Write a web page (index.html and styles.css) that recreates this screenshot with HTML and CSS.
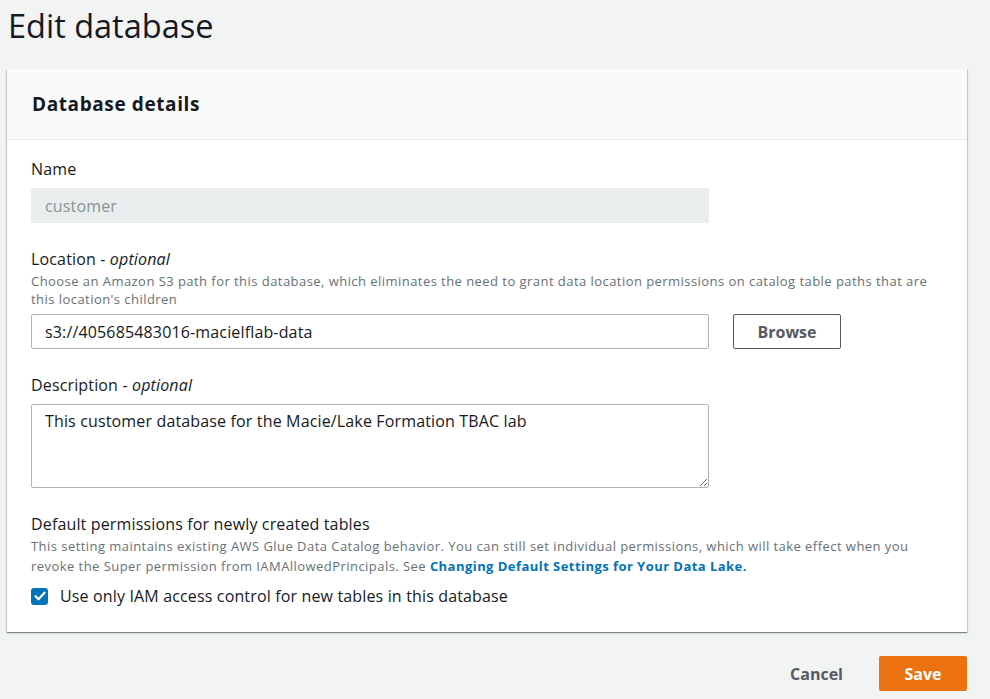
FILE: index.html
```html
<!DOCTYPE html>
<html lang="en">
<head>
<meta charset="utf-8">
<title>Edit database</title>
<link rel="stylesheet" href="styles.css">
</head>
<body>
<main class="page">
  <h1 class="title">Edit database</h1>
  <section class="card">
    <header class="card-header"><h2>Database details</h2></header>
    <div class="card-body">
      <div class="field">
        <label class="label">Name</label>
        <div class="input-row"><input class="input" type="text" value="customer" disabled></div>
      </div>
      <div class="field">
        <label class="label">Location - <i>optional</i></label>
        <p class="desc desc-a">Choose an Amazon S3 path for this database, which eliminates the need to grant data location permissions on catalog table paths that are this location's children</p>
        <div class="input-row after-desc">
          <input class="input" type="text" value="s3://405685483016-macielflab-data">
          <button class="btn-normal" type="button">Browse</button>
        </div>
      </div>
      <div class="field">
        <label class="label">Description - <i>optional</i></label>
        <div class="input-row"><textarea class="textarea">This customer database for the Macie/Lake Formation TBAC lab</textarea></div>
      </div>
      <div class="field">
        <label class="label">Default permissions for newly created tables</label>
        <p class="desc desc-b">This setting maintains existing AWS Glue Data Catalog behavior. You can still set individual permissions, which will take effect when you revoke the Super permission from IAMAllowedPrincipals. See <a class="link" href="#">Changing Default Settings for Your Data Lake.</a></p>
        <label class="check">
          <span class="box"><svg viewBox="0 0 16 16" width="16" height="16"><path d="M3.5 8.2l3 3 6-6.5" fill="none" stroke="#fff" stroke-width="2.2" stroke-linecap="round" stroke-linejoin="round"/></svg></span>
          <span class="check-text">Use only IAM access control for new tables in this database</span>
        </label>
      </div>
    </div>
  </section>
  <div class="actions">
    <button class="btn-link" type="button">Cancel</button>
    <button class="btn-primary" type="button">Save</button>
  </div>
</main>
</body>
</html>
```

FILE: styles.css
```css
* { box-sizing: border-box; }
html, body { margin: 0; padding: 0; }
body {
  background: #f2f3f3;
  font-family: "Open Sans", "Noto Sans", Arial, sans-serif;
  color: #16191f;
  width: 990px;
  height: 699px;
  overflow: hidden;
}
.page {
  width: 960px;
  margin-left: 7px;
}
.title {
  margin: 0;
  padding: 6px 0 0 1px;
  font-size: 32.5px;
  line-height: 40px;
  font-weight: 400;
  color: #16191f;
}
.card {
  margin-top: 23px;
  background: #fff;
  box-shadow: 0 1px 1px 0 rgba(0,28,36,.3), 1px 1px 1px 0 rgba(0,28,36,.15), -1px 1px 1px 0 rgba(0,28,36,.15);
}
.card-header {
  height: 71px;
  background: #fafafa;
  border-bottom: 1px solid #eaeded;
  display: flex;
  align-items: center;
  padding: 0 25px;
}
.card-header h2 {
  margin: 0;
  font-size: 19px;
  letter-spacing: 0.6px;
  font-weight: 700;
  line-height: 22px;
}
.card-body {
  padding: 18px 24px 25px;
  display: flex;
  flex-direction: column;
  gap: 25px;
}
.field { display: flex; flex-direction: column; }
.label {
  font-size: 16px;
  line-height: 22px;
  letter-spacing: 0.15px;
}
.label i { font-style: italic; }
.desc {
  margin: 0;
  font-size: 13px;
  letter-spacing: 0.45px;
  color: #687078;
}
.desc-a { line-height: 18px; margin-top: 2px; }
.desc-b { line-height: 20px; margin-top: 1px; }
.input-row {
  display: flex;
  gap: 24px;
  margin-top: 8px;
}
.input-row.after-desc { margin-top: 6px; }
.input {
  width: 678px;
  height: 35px;
  border: 1px solid #aab7b8;
  border-radius: 2px;
  padding: 0 13px;
  font-family: inherit;
  font-size: 16px;
  letter-spacing: 0.15px;
  color: #16191f;
  background: #fff;
}
.input:disabled {
  background: #eaeded;
  border-color: #eaeded;
  color: #879596;
}
.textarea {
  width: 678px;
  height: 84px;
  border: 1px solid #aab7b8;
  border-radius: 2px;
  padding: 5px 13px;
  font-family: inherit;
  font-size: 16px;
  letter-spacing: 0.15px;
  line-height: 22px;
  color: #16191f;
  resize: both;
}
.btn-normal {
  width: 108px;
  height: 35px;
  border: 1px solid #545b64;
  border-radius: 2px;
  background: #fff;
  color: #545b64;
  font-family: inherit;
  font-weight: 700;
  font-size: 16px;
}
.link { color: #0073bb; font-weight: 700; text-decoration: none; }
.check {
  display: flex;
  align-items: center;
  gap: 12px;
  margin-top: 9px;
}
.box {
  width: 17px;
  height: 17px;
  border-radius: 3px;
  background: #0073bb;
  display: flex;
  align-items: center;
  justify-content: center;
}
.check-text { font-size: 16px; line-height: 22px; letter-spacing: 0.15px; }
.actions {
  display: flex;
  justify-content: flex-end;
  align-items: center;
  gap: 36px;
  margin-top: 24px;
}
.btn-link {
  border: 0;
  background: none;
  color: #545b64;
  font-family: inherit;
  font-weight: 700;
  font-size: 16px;
  padding: 0;
}
.btn-primary {
  width: 88px;
  height: 35px;
  border: 0;
  border-radius: 2px;
  background: #ec7211;
  color: #fff;
  font-family: inherit;
  font-weight: 700;
  font-size: 16px;
}
```
